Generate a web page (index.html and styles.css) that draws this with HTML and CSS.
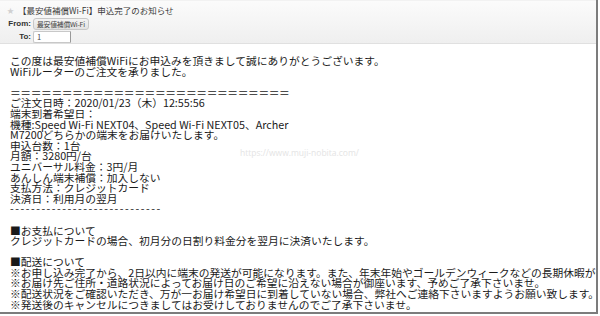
FILE: index.html
```html
<!DOCTYPE html>
<html lang="ja">
<head>
<meta charset="utf-8">
<link rel="stylesheet" href="styles.css">
</head>
<body>
<div class="mail">
  <div class="head">
    <div class="subject-row"><span class="star">★</span><span class="subject">【最安値補償Wi-Fi】申込完了のお知らせ</span></div>
    <div class="field"><span class="label">From:</span><span class="pill">最安値補償Wi-Fi</span></div>
    <div class="field"><span class="label">To:</span><span class="tobox">1</span></div>
  </div>
  <div class="body">
    <div class="line">この度は最安値補償WiFiにお申込みを頂きまして誠にありがとうございます。</div>
    <div class="line">WiFiルーターのご注文を承りました。</div>
    <div class="line">&nbsp;</div>
    <div class="line eq">＝＝＝＝＝＝＝＝＝＝＝＝＝＝＝＝＝＝＝＝＝＝＝＝＝＝＝</div>
    <div class="line">ご注文日時：2020/01/23（木）12:55:56</div>
    <div class="line">端末到着希望日：</div>
    <div class="line">機種:Speed Wi-Fi NEXT04、Speed Wi-Fi NEXT05、Archer</div>
    <div class="line">M7200どちらかの端末をお届けいたします。</div>
    <div class="line">申込台数：1台</div>
    <div class="line">月額：3280円/台</div>
    <div class="line">ユニバーサル料金：3円/月</div>
    <div class="line">あんしん端末補償：加入しない</div>
    <div class="line">支払方法：クレジットカード</div>
    <div class="line">決済日：利用月の翌月</div>
    <div class="line dash">-----------------------------</div>
    <div class="line">&nbsp;</div>
    <div class="line">■お支払について</div>
    <div class="line">クレジットカードの場合、初月分の日割り料金分を翌月に決済いたします。</div>
    <div class="line">&nbsp;</div>
    <div class="line">■配送について</div>
    <div class="line">※お申し込み完了から、2日以内に端末の発送が可能になります。また、年末年始やゴールデンウィークなどの長期休暇が発生する場合がございます。</div>
    <div class="line">※お届け先ご住所・道路状況によってお届け日のご希望に沿えない場合が御座います、予めご了承下さいませ。</div>
    <div class="line">※配送状況をご確認いただき、万が一お届け希望日に到着していない場合、弊社へご連絡下さいますようお願い致します。</div>
    <div class="line">※発送後のキャンセルにつきましてはお受けしておりませんのでご了承下さいませ。</div>
    <div class="watermark">https://www.muji-nobita.com/</div>
  </div>
</div>
</body>
</html>
```
FILE: styles.css
```css
html, body {
  margin: 0;
  padding: 0;
  background: #ffffff;
}
.mail {
  width: 596px;
  height: 312px;
  border-right: 2px solid #7c7c7c;
  border-bottom: 2px solid #7c7c7c;
  overflow: hidden;
  display: flex;
  flex-direction: column;
  font-family: "Noto Sans CJK JP", "Noto Sans", sans-serif;
}
.head {
  height: 44px;
  box-sizing: border-box;
  background: linear-gradient(#fbfbfb, #efefef);
  border-top: 1px solid #f2f2f2;
  border-bottom: 1px solid #e0e0e0;
  padding: 4px 0 0 7px;
  display: flex;
  flex-direction: column;
  gap: 1px;
  flex-shrink: 0;
}
.subject-row {
  display: flex;
  align-items: center;
  height: 11px;
  font-size: 8.5px;
  line-height: 11px;
  color: #3a3a3a;
}
.star {
  color: #d0d0d0;
  font-size: 7px;
  margin-right: 4px;
}
.field {
  display: flex;
  align-items: center;
  height: 11px;
  margin-top: 1px;
  font-size: 8px;
}
.label {
  width: 24px;
  text-align: right;
  font-weight: bold;
  color: #333;
  font-family: "Liberation Sans", sans-serif;
  margin-right: 2px;
}
.pill {
  height: 10px;
  line-height: 10px;
  padding: 0 3px;
  border: 1px solid #c8c8c8;
  border-radius: 3px;
  background: linear-gradient(#f4f4f4, #e2e2e2);
  color: #444;
  font-size: 6.8px;
  letter-spacing: -0.2px;
}
.tobox {
  width: 33px;
  height: 10px;
  line-height: 10px;
  padding-left: 3px;
  border: 1px solid #c8c8c8;
  border-right: 1px solid #999;
  border-radius: 2px 0 0 2px;
  background: #fff;
  color: #444;
  font-size: 7.5px;
}
.body {
  position: relative;
  flex: 1;
  padding: 12px 0 0 10px;
  font-size: 10.75px;
  line-height: 10.6px;
  color: #1a1a1a;
}
.line {
  white-space: nowrap;
  height: 10.6px;
}
.eq {
  letter-spacing: -0.4px;
}
.dash {
  letter-spacing: 1.5px;
}
.watermark {
  position: absolute;
  left: 240px;
  top: 104px;
  font-family: "Open Sans", sans-serif;
  font-size: 8.5px;
  color: #e4e4e4;
  line-height: 10px;
}
```
